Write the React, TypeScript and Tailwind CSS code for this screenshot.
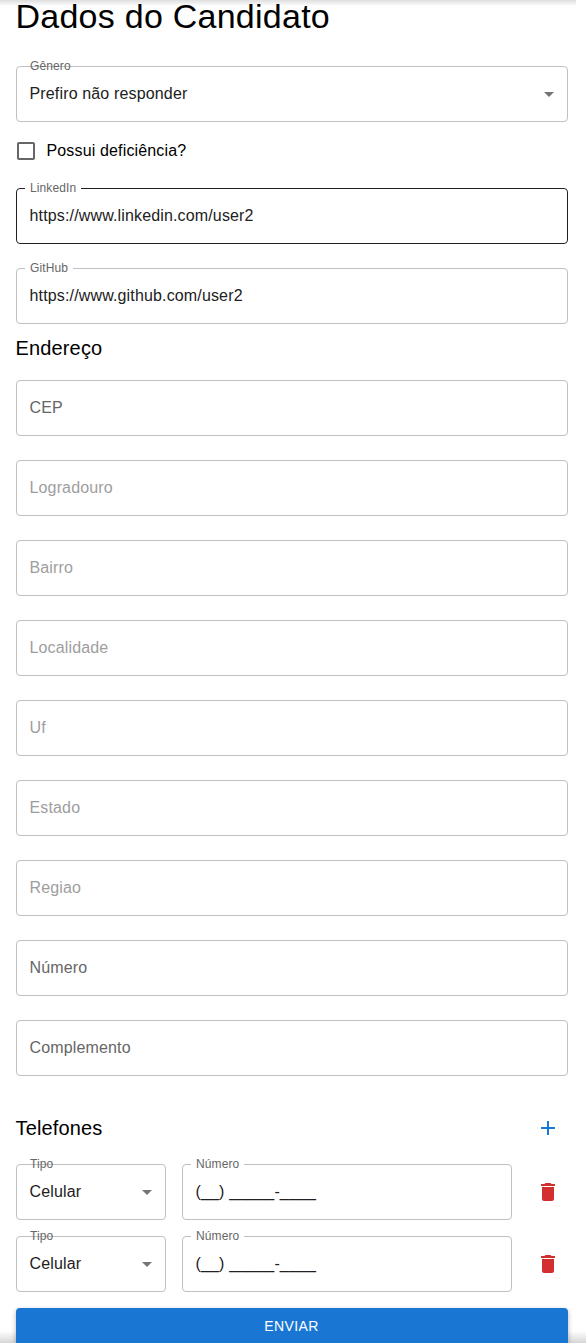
import React from 'react';

type FieldProps = {
  label: string;
  value?: string;
  select?: boolean;
  disabled?: boolean;
  active?: boolean;
  className?: string;
};

function Field({ label, value, select, disabled, active, className = '' }: FieldProps) {
  return (
    <div
      className={`relative flex h-14 items-center justify-between rounded border pl-[12.5px] pr-[6px] ${
        active ? 'border-[#212121]' : 'border-[#c0c0c0]'
      } ${className}`}
    >
      {value ? (
        <>
          <span
            className={`absolute left-2 -top-2.5 px-[5px] text-[12px] leading-[18px] tracking-[0.11px] text-[#666] ${
              select ? '' : 'bg-white'
            }`}
          >
            {label}
          </span>
          <span className="pb-px text-[#212121]">{value}</span>
        </>
      ) : (
        <span className={`pb-px ${disabled ? 'text-[#9e9e9e]' : 'text-[#666]'}`}>{label}</span>
      )}
      {select && (
        <svg viewBox="0 0 24 24" className="size-6 fill-[#757575]">
          <path d="M7 10l5 5 5-5z" />
        </svg>
      )}
    </div>
  );
}

const addressFields = [
  { label: 'CEP' },
  { label: 'Logradouro', disabled: true },
  { label: 'Bairro', disabled: true },
  { label: 'Localidade', disabled: true },
  { label: 'Uf', disabled: true },
  { label: 'Estado', disabled: true },
  { label: 'Regiao', disabled: true },
  { label: 'Número' },
  { label: 'Complemento' },
];

function PhoneRow() {
  return (
    <div className="flex items-center">
      <Field label="Tipo" value="Celular" select className="w-[150px]" />
      <Field label="Número" value="(__) _____-____" className="ml-4 w-[330px]" />
      <button aria-label="Remover telefone" className="ml-auto flex size-10 items-center justify-center">
        <svg viewBox="0 0 24 24" className="size-6 fill-[#d32f2f]">
          <path d="M6 19c0 1.1.9 2 2 2h8c1.1 0 2-.9 2-2V7H6v12zM19 4h-3.5l-1-1h-5l-1 1H5v2h14V4z" />
        </svg>
      </button>
    </div>
  );
}

export default function App() {
  return (
    <div className="relative h-[1344px] overflow-hidden bg-white font-['Liberation_Sans',Arial,sans-serif] text-[16px] leading-6 tracking-[0.15px] text-black">
      <div className="absolute left-0 top-0 h-[6px] w-[576px] bg-linear-to-b from-[#dedede] to-white" />
      <div className="absolute left-0 top-[1331px] h-3 w-full bg-linear-to-b from-white to-[#d6d6d6]" />
      <main className="relative ml-4 flex h-[1343px] w-[552px] flex-col">
        <h1 className="-ml-[0.5px] h-[37px] shrink-0 text-[34px] leading-[32px] tracking-[0.25px]">Dados do Candidato</h1>
        <Field label="Gênero" value="Prefiro não responder" select className="mt-[29px]" />
        <label className="my-2 -ml-[11px] flex h-[42px] shrink-0 items-center">
          <span className="flex size-[42px] items-center justify-center">
            <svg viewBox="0 0 24 24" className="size-6 fill-[#666]">
              <path d="M19 5v14H5V5h14m0-2H5c-1.1 0-2 .9-2 2v14c0 1.1.9 2 2 2h14c1.1 0 2-.9 2-2V5c0-1.1-.9-2-2-2z" />
            </svg>
          </span>
          <span className="-ml-[0.5px] pb-px">Possui deficiência?</span>
        </label>
        <div className="mt-2 flex flex-col gap-6">
          <Field label="LinkedIn" value="https://www.linkedin.com/user2" active />
          <Field label="GitHub" value="https://www.github.com/user2" />
        </div>
        <h2 className="-ml-[0.5px] mb-4 mt-2 text-[20px] leading-8">Endereço</h2>
        <div className="flex flex-col gap-6">
          {addressFields.map((field) => (
            <Field key={field.label} {...field} />
          ))}
        </div>
        <div className="mt-8 flex h-10 items-center justify-between">
          <h2 className="-ml-[0.5px] text-[20px] leading-8">Telefones</h2>
          <button aria-label="Adicionar telefone" className="flex size-10 items-center justify-center">
            <svg viewBox="0 0 24 24" className="size-6 fill-[#1976d2]">
              <path d="M19 13h-6v6h-2v-6H5v-2h6V5h2v6h6v2z" />
            </svg>
          </button>
        </div>
        <div className="mt-4 flex flex-col gap-4">
          <PhoneRow />
          <PhoneRow />
        </div>
        <button className="mt-4 h-[35px] rounded-t bg-[#1976d2] pr-px text-[14px] leading-[37px] tracking-[0.4px] text-white shadow-[0_2px_5px_rgba(0,0,0,0.3)]">
          ENVIAR
        </button>
      </main>
      <div className="absolute left-0 top-[1343px] h-px w-full bg-white" />
    </div>
  );
}
